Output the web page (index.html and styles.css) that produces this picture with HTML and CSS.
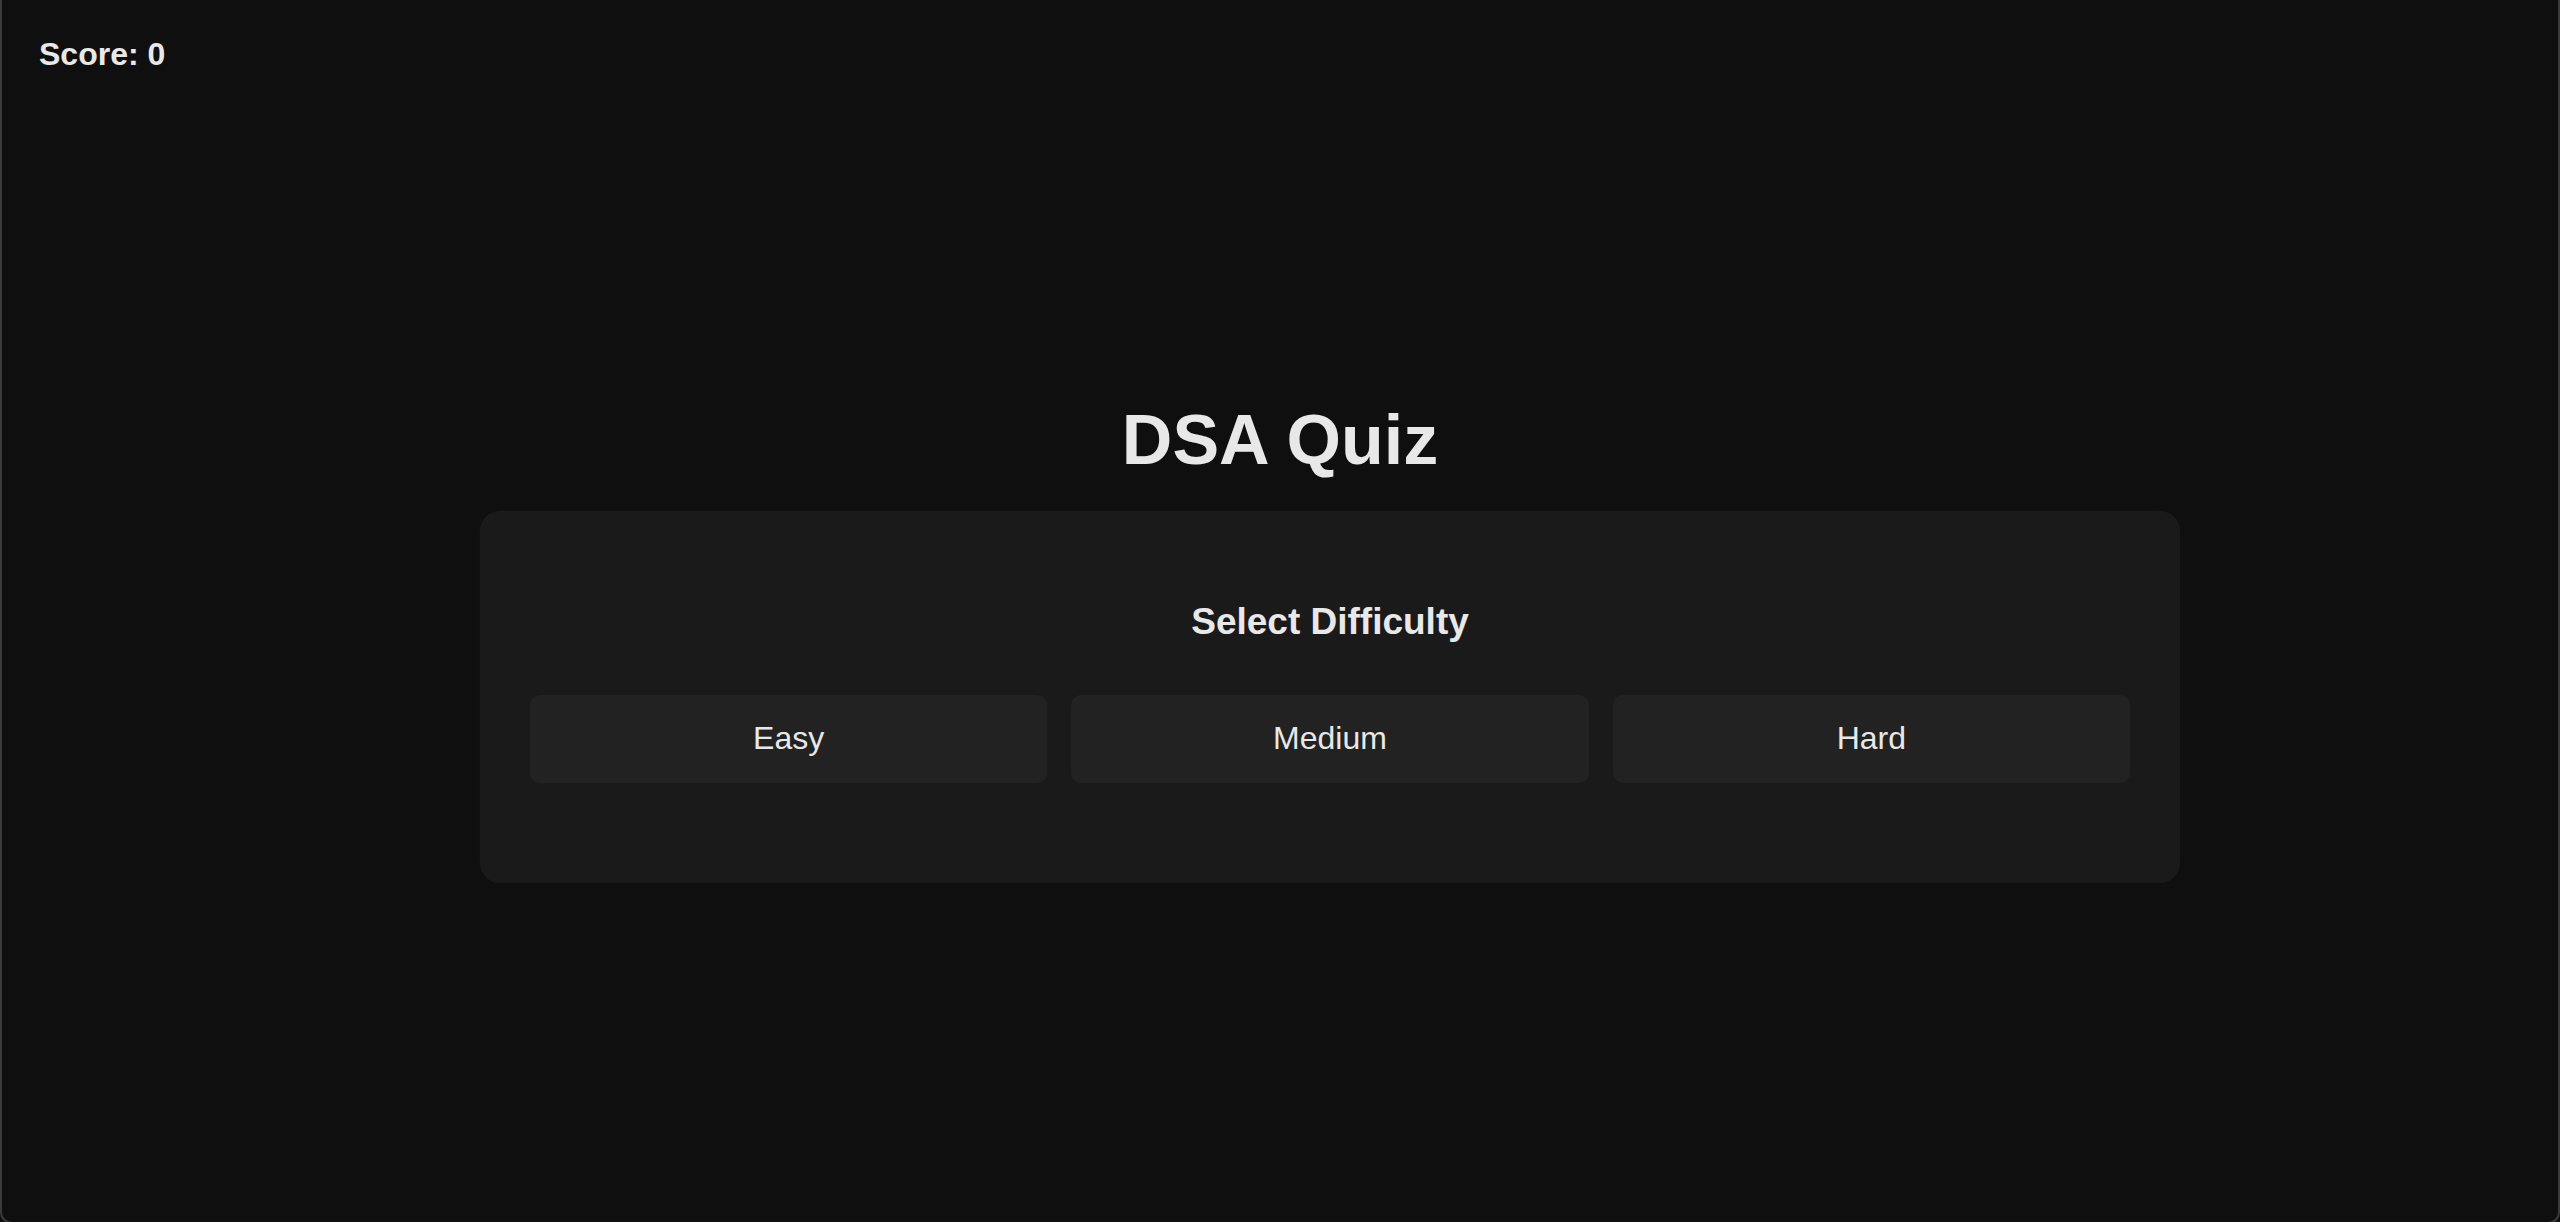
FILE: index.html
```html
<!DOCTYPE html>
<html lang="en">
<head>
<meta charset="utf-8">
<title>DSA Quiz</title>
<link rel="stylesheet" href="styles.css">
</head>
<body>
<div class="frame">
  <div class="score">Score: 0</div>
  <h1 class="title">DSA Quiz</h1>
  <section class="card">
    <h2 class="card-heading">Select Difficulty</h2>
    <div class="options">
      <button class="option">Easy</button>
      <button class="option">Medium</button>
      <button class="option">Hard</button>
    </div>
  </section>
</div>
</body>
</html>
```
FILE: styles.css
```css
html, body {
  margin: 0;
  padding: 0;
  height: 1222px;
  overflow: hidden;
  background: #0e0e0e;
}

body {
  font-family: "Liberation Sans", Arial, Helvetica, sans-serif;
  color: #e8e8e8;
}

.frame {
  box-sizing: border-box;
  height: 1224px;
  border: 2px solid #3a3a3a;
  border-top: none;
  border-radius: 0 0 12px 12px;
  background: #0f0f0f;
  padding-top: 36px;
}

.score {
  font-size: 32px;
  line-height: 37px;
  font-weight: 700;
  padding-left: 37px;
}

.title {
  margin: 327px 0 0;
  font-size: 70px;
  line-height: 80px;
  font-weight: 700;
  text-align: center;
}

.card {
  box-sizing: border-box;
  width: 1700px;
  margin: 31px 0 0 478px;
  padding: 90px 50px 100px;
  background: #1a1a1a;
  border-radius: 20px;
  box-shadow: 0 0 24px rgba(255, 255, 255, 0.018);
}

.card-heading {
  margin: 0;
  font-size: 37px;
  line-height: 42px;
  font-weight: 700;
  text-align: center;
}

.options {
  display: grid;
  grid-template-columns: repeat(3, 1fr);
  gap: 24px;
  margin-top: 52px;
}

.option {
  font-family: inherit;
  font-size: 32px;
  line-height: 38px;
  padding: 24px 0 26px;
  color: #e8e8e8;
  background: #222222;
  border: none;
  border-radius: 10px;
  text-align: center;
}
```
